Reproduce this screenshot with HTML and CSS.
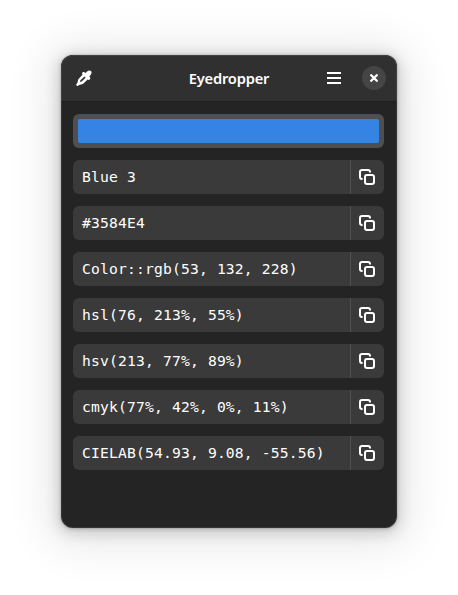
FILE: index.html
```html
<!DOCTYPE html>
<html lang="en">
<head>
<meta charset="utf-8">
<title>Eyedropper</title>
<link rel="stylesheet" href="styles.css">
</head>
<body>
<svg class="defs" width="0" height="0" aria-hidden="true">
  <symbol id="copy" viewBox="0 0 16 16">
    <rect x="6" y="6" width="9" height="9" rx="2"/>
    <path d="M11 3.6V3a2 2 0 0 0-2-2H3a2 2 0 0 0-2 2v5a2 2 0 0 0 2 2h.6"/>
  </symbol>
</svg>
<main class="window">
  <header class="header">
    <button class="tool" aria-label="Pick a color">
      <svg class="picker" viewBox="0 0 16 16">
        <path fill-rule="evenodd" d="M10.800 1.700C12 .4 13.900 0 15 1c1 1.100.7 3-.6 4.200L13.300 6.500l.6.800c.5.700.5 1.600-.1 2.200-.6.600-1.400.6-2.100.1L6.900 14l-3.800.9-.9.800c-.5.400-1.100.4-1.600-.1s-.5-1.100-.1-1.600l.8-.9 1-3.900L6.500 4.700l-.1-.1c-.5-.7-.5-1.500.1-2.100s1.500-.6 2.200-.1l.9.600zM8.400 6.500 4.400 10.300l-.5 1.800 1.800-.5 3.900-3.900z"/>
      </svg>
    </button>
    <h1 class="title">Eyedropper</h1>
    <div class="controls">
      <button class="menu" aria-label="Menu"><svg viewBox="0 0 14 12"><path d="M0 1h14M0 6h14M0 11h14"/></svg></button>
      <button class="close" aria-label="Close"><svg viewBox="0 0 8 8"><path d="M1.200 1.200l5.600 5.600M6.800 1.200L1.200 6.800"/></svg></button>
    </div>
  </header>
  <section class="content">
    <div class="swatch"></div>
    <div class="row"><span class="value">Blue 3</span><button class="copy" aria-label="Copy"><svg><use href="#copy"/></svg></button></div>
    <div class="row"><span class="value">#3584E4</span><button class="copy" aria-label="Copy"><svg><use href="#copy"/></svg></button></div>
    <div class="row"><span class="value">Color::rgb(53, 132, 228)</span><button class="copy" aria-label="Copy"><svg><use href="#copy"/></svg></button></div>
    <div class="row"><span class="value">hsl(76, 213%, 55%)</span><button class="copy" aria-label="Copy"><svg><use href="#copy"/></svg></button></div>
    <div class="row"><span class="value">hsv(213, 77%, 89%)</span><button class="copy" aria-label="Copy"><svg><use href="#copy"/></svg></button></div>
    <div class="row"><span class="value">cmyk(77%, 42%, 0%, 11%)</span><button class="copy" aria-label="Copy"><svg><use href="#copy"/></svg></button></div>
    <div class="row"><span class="value">CIELAB(54.93, 9.08, -55.56)</span><button class="copy" aria-label="Copy"><svg><use href="#copy"/></svg></button></div>
  </section>
</main>
</body>
</html>
```
FILE: styles.css
```css
* { box-sizing: border-box; }
body {
  margin: 0;
  padding: 55px 61px 67px;
  height: 595px;
  background: #fff;
  overflow: hidden;
}
.defs { display: block; }
.window {
  width: 336px;
  height: 473px;
  border-radius: 12px;
  background: #242424;
  color: #fff;
  overflow: hidden;
  box-shadow: 0 0 0 1px rgba(0, 0, 0, .05), 0 1px 4px rgba(0, 0, 0, .2), 0 3px 14px 4px rgba(0, 0, 0, .13), 0 4px 44px 14px rgba(0, 0, 0, .09);
  position: relative;
}
.window::after {
  content: "";
  position: absolute;
  inset: 0;
  border-radius: 12px;
  box-shadow: inset 0 0 0 1px rgba(255, 255, 255, .09);
  pointer-events: none;
}
button {
  margin: 0;
  padding: 0;
  border: 0;
  background: none;
  color: inherit;
  display: flex;
  align-items: center;
  justify-content: center;
}
.header {
  height: 47px;
  padding: 0 11px 0 6px;
  background: #303030;
  border-bottom: 1px solid #1e1e1e;
  display: grid;
  grid-template-columns: 1fr auto 1fr;
  align-items: center;
}
.tool { width: 34px; height: 34px; }
.picker { width: 16px; height: 16px; fill: #fff; }
.title {
  margin: 0;
  padding-left: 5px;
  font: 600 14.67px/22px "Noto Sans", sans-serif;
  letter-spacing: -.2px;
}
.controls {
  display: flex;
  justify-content: flex-end;
  align-items: center;
  gap: 11px;
}
.menu { width: 34px; height: 34px; }
.menu svg { width: 14px; height: 12px; stroke: #fff; stroke-width: 2; }
.close { width: 24px; height: 24px; border-radius: 50%; background: #454545; }
.close svg { width: 8px; height: 8px; stroke: #fff; stroke-width: 2.3; stroke-linecap: round; }
.content {
  padding: 12px 13px 12px 12px;
  display: flex;
  flex-direction: column;
  gap: 12px;
}
.swatch {
  height: 34px;
  padding: 5px;
  border-radius: 6px;
  background: #4f4f4f;
}
.swatch::before {
  content: "";
  display: block;
  height: 24px;
  border-radius: 2px;
  background: #3584e4;
}
.row {
  height: 34px;
  border-radius: 6px;
  background: #3a3a3a;
  display: flex;
}
.value {
  flex: 1;
  padding-left: 9px;
  font: 14.67px/34px "DejaVu Sans Mono", monospace;
  letter-spacing: .168px;
  white-space: pre;
}
.copy { width: 34px; padding-right: 1px; border-left: 1px solid #515151; }
.copy svg { width: 16px; height: 16px; fill: none; stroke: #fff; stroke-width: 2; }
```
